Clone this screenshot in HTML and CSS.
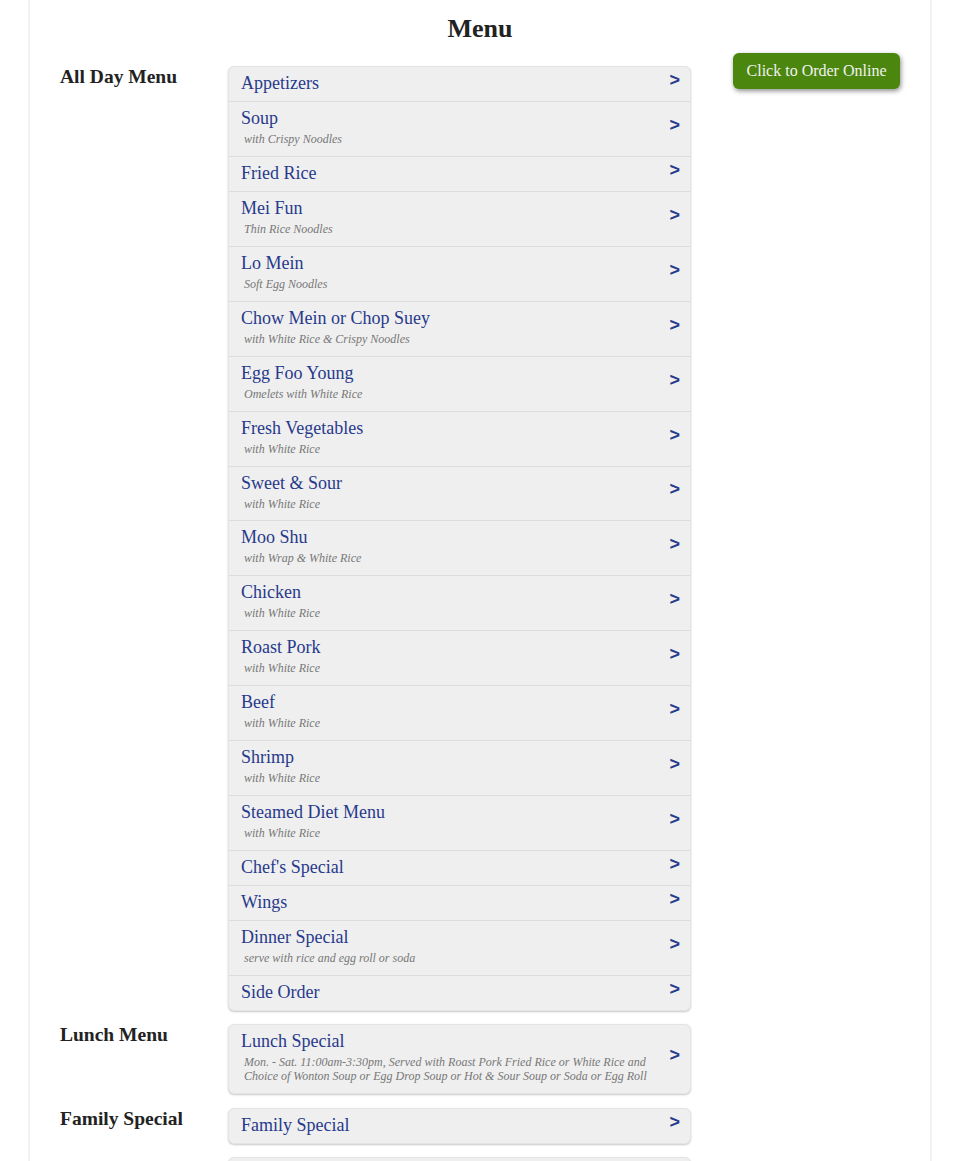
FILE: index.html
```html
<!DOCTYPE html>
<html lang="en">
<head>
<meta charset="utf-8">
<title>Menu</title>
<link rel="stylesheet" href="styles.css">
</head>
<body>
<div class="page">
  <h1 class="page-title">Menu</h1>
  <div class="layout">
    <div class="menus">
      <section class="section">
        <h2 class="section-label">All Day Menu</h2>
        <ul class="group">
          <li class="row"><div class="text"><div class="name">Appetizers</div></div><span class="arrow">&gt;</span></li>
          <li class="row"><div class="text"><div class="name">Soup</div><div class="sub">with Crispy Noodles</div></div><span class="arrow">&gt;</span></li>
          <li class="row"><div class="text"><div class="name">Fried Rice</div></div><span class="arrow">&gt;</span></li>
          <li class="row"><div class="text"><div class="name">Mei Fun</div><div class="sub">Thin Rice Noodles</div></div><span class="arrow">&gt;</span></li>
          <li class="row"><div class="text"><div class="name">Lo Mein</div><div class="sub">Soft Egg Noodles</div></div><span class="arrow">&gt;</span></li>
          <li class="row"><div class="text"><div class="name">Chow Mein or Chop Suey</div><div class="sub">with White Rice &amp; Crispy Noodles</div></div><span class="arrow">&gt;</span></li>
          <li class="row"><div class="text"><div class="name">Egg Foo Young</div><div class="sub">Omelets with White Rice</div></div><span class="arrow">&gt;</span></li>
          <li class="row"><div class="text"><div class="name">Fresh Vegetables</div><div class="sub">with White Rice</div></div><span class="arrow">&gt;</span></li>
          <li class="row"><div class="text"><div class="name">Sweet &amp; Sour</div><div class="sub">with White Rice</div></div><span class="arrow">&gt;</span></li>
          <li class="row"><div class="text"><div class="name">Moo Shu</div><div class="sub">with Wrap &amp; White Rice</div></div><span class="arrow">&gt;</span></li>
          <li class="row"><div class="text"><div class="name">Chicken</div><div class="sub">with White Rice</div></div><span class="arrow">&gt;</span></li>
          <li class="row"><div class="text"><div class="name">Roast Pork</div><div class="sub">with White Rice</div></div><span class="arrow">&gt;</span></li>
          <li class="row"><div class="text"><div class="name">Beef</div><div class="sub">with White Rice</div></div><span class="arrow">&gt;</span></li>
          <li class="row"><div class="text"><div class="name">Shrimp</div><div class="sub">with White Rice</div></div><span class="arrow">&gt;</span></li>
          <li class="row"><div class="text"><div class="name">Steamed Diet Menu</div><div class="sub">with White Rice</div></div><span class="arrow">&gt;</span></li>
          <li class="row"><div class="text"><div class="name">Chef's Special</div></div><span class="arrow">&gt;</span></li>
          <li class="row"><div class="text"><div class="name">Wings</div></div><span class="arrow">&gt;</span></li>
          <li class="row"><div class="text"><div class="name">Dinner Special</div><div class="sub">serve with rice and egg roll or soda</div></div><span class="arrow">&gt;</span></li>
          <li class="row"><div class="text"><div class="name">Side Order</div></div><span class="arrow">&gt;</span></li>
        </ul>
      </section>
      <section class="section">
        <h2 class="section-label">Lunch Menu</h2>
        <ul class="group">
          <li class="row"><div class="text"><div class="name">Lunch Special</div><div class="sub">Mon. - Sat. 11:00am-3:30pm, Served with Roast Pork Fried Rice or White Rice and Choice of Wonton Soup or Egg Drop Soup or Hot &amp; Sour Soup or Soda or Egg Roll</div></div><span class="arrow">&gt;</span></li>
        </ul>
      </section>
      <section class="section">
        <h2 class="section-label">Family Special</h2>
        <ul class="group">
          <li class="row"><div class="text"><div class="name">Family Special</div></div><span class="arrow">&gt;</span></li>
        </ul>
      </section>
      <section class="section">
        <h2 class="section-label">Beverages</h2>
        <ul class="group">
          <li class="row"><div class="text"><div class="name">Beverages</div></div><span class="arrow">&gt;</span></li>
        </ul>
      </section>
    </div>
    <aside class="aside">
      <a class="order-btn" href="#">Click to Order Online</a>
    </aside>
  </div>
</div>
</body>
</html>
```
FILE: styles.css
```css
html, body {
  margin: 0;
  padding: 0;
  background: #ffffff;
}
body {
  font-family: "Liberation Serif", "Times New Roman", serif;
  color: #222222;
}
.page {
  width: 900px;
  margin: 0 auto;
  border-left: 2px solid #f1f1f1;
  border-right: 2px solid #f1f1f1;
  min-height: 1300px;
}
.page-title {
  margin: 0;
  padding-top: 14px;
  font-size: 26px;
  line-height: 30px;
  font-weight: bold;
  text-align: center;
  color: #222;
}
.layout {
  display: flex;
  margin-top: 9px;
  padding: 0 30px 0 30px;
}
.menus {
  width: 632px;
  padding-top: 13px;
}
.section {
  display: flex;
  margin-bottom: 13.5px;
}
.section-label {
  width: 168px;
  flex: none;
  margin: 0;
  padding-top: 1px;
  font-size: 19.5px;
  line-height: 20px;
  font-weight: bold;
  color: #222;
}
.group {
  width: 461px;
  margin: 0;
  padding: 0;
  list-style: none;
  background: #efefef;
  border: 1px solid #e4e4e4;
  border-radius: 6px;
  box-shadow: 0 1px 2px rgba(0, 0, 0, 0.22);
}
.row {
  display: flex;
  align-items: center;
  padding: 6px 10px 8px 12px;
  border-bottom: 1px solid #dcdcdc;
}
.row:last-child {
  border-bottom: none;
}
.text {
  flex: 1;
  min-width: 0;
}
.name {
  font-size: 18px;
  line-height: 20px;
  color: #273a8c;
}
.sub {
  margin: 4px 0 1.93px;
  padding-left: 3px;
  font-size: 12px;
  line-height: 14px;
  font-style: italic;
  color: #777777;
}
.arrow {
  flex: none;
  margin: -6px 0 0 12px;
  font-family: "Liberation Sans", Arial, sans-serif;
  font-weight: bold;
  font-size: 18px;
  line-height: 20px;
  color: #273a8c;
}
.aside {
  flex: 1;
  display: flex;
  justify-content: flex-end;
  align-items: flex-start;
}
.order-btn {
  display: block;
  width: 167px;
  height: 36px;
  box-sizing: border-box;
  line-height: 36px;
  text-align: center;
  font-size: 16px;
  color: #f2f2f2;
  text-decoration: none;
  background: #4b870e;
  border-radius: 6px;
  box-shadow: 1px 2px 5px rgba(0, 0, 0, 0.45);
}
```
